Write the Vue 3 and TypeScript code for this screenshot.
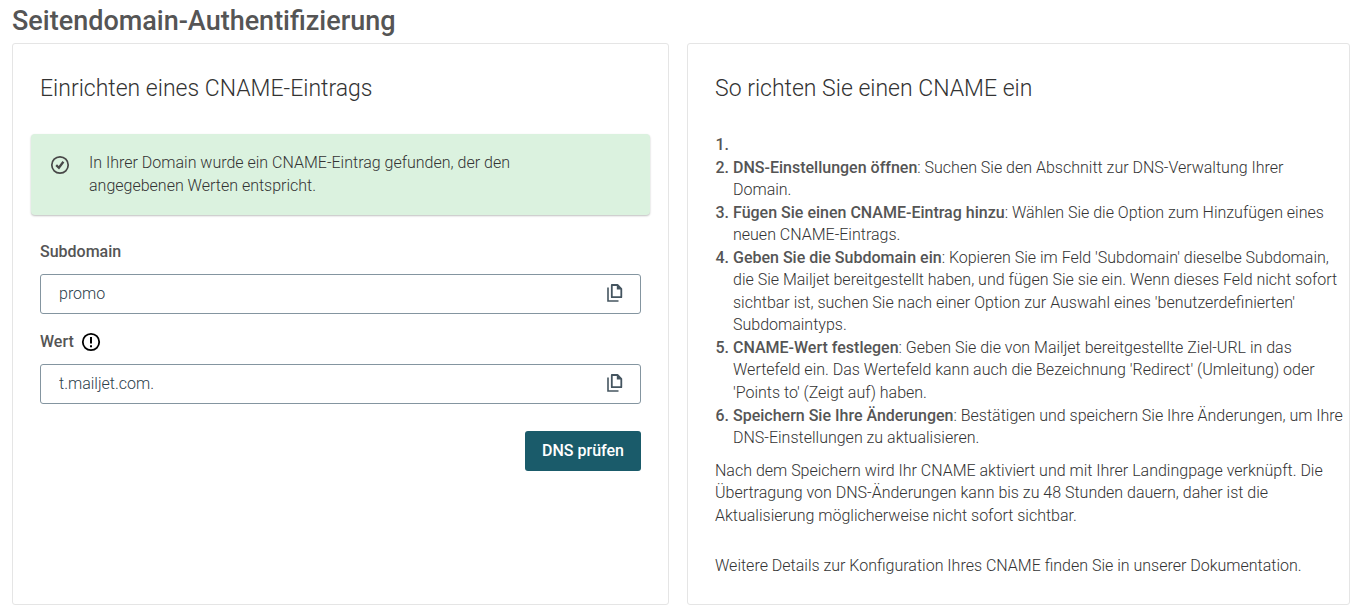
<script setup lang="ts">
import { ref } from 'vue'

interface Step {
  title: string
  text: string
}

const subdomain = ref('promo')
const target = ref('t.mailjet.com.')

const steps: Step[] = [
  { title: '', text: '' },
  {
    title: 'DNS-Einstellungen öffnen',
    text: ': Suchen Sie den Abschnitt zur DNS-Verwaltung Ihrer Domain.',
  },
  {
    title: 'Fügen Sie einen CNAME-Eintrag hinzu',
    text: ': Wählen Sie die Option zum Hinzufügen eines neuen CNAME-Eintrags.',
  },
  {
    title: 'Geben Sie die Subdomain ein',
    text: ": Kopieren Sie im Feld 'Subdomain' dieselbe Subdomain, die Sie Mailjet bereitgestellt haben, und fügen Sie sie ein. Wenn dieses Feld nicht sofort sichtbar ist, suchen Sie nach einer Option zur Auswahl eines 'benutzerdefinierten' Subdomaintyps.",
  },
  {
    title: 'CNAME-Wert festlegen',
    text: ": Geben Sie die von Mailjet bereitgestellte Ziel-URL in das Wertefeld ein. Das Wertefeld kann auch die Bezeichnung 'Redirect' (Umleitung) oder 'Points to' (Zeigt auf) haben.",
  },
  {
    title: 'Speichern Sie Ihre Änderungen',
    text: ': Bestätigen und speichern Sie Ihre Änderungen, um Ihre DNS-Einstellungen zu aktualisieren.',
  },
]

function copy(value: string) {
  navigator.clipboard?.writeText(value)
}
</script>

<template>
  <main class="page">
    <h1>Seitendomain-Authentifizierung</h1>
    <div class="columns">
      <section class="card setup">
        <h2>Einrichten eines CNAME-Eintrags</h2>
        <div class="notice" role="status">
          <svg class="notice-icon" viewBox="0 0 20 20" aria-hidden="true">
            <circle cx="10" cy="10" r="8.2" fill="none" stroke="currentColor" stroke-width="1.7" />
            <path d="M6.2 10.2 L8.9 12.8 L13.4 6.8" fill="none" stroke="currentColor" stroke-width="2.3" />
          </svg>
          <p>In Ihrer Domain wurde ein CNAME-Eintrag gefunden, der den angegebenen Werten entspricht.</p>
        </div>
        <form @submit.prevent>
          <label for="subdomain">Subdomain</label>
          <div class="field">
            <input id="subdomain" v-model="subdomain" type="text" readonly />
            <button class="copy" type="button" aria-label="Subdomain kopieren" @click="copy(subdomain)">
              <svg viewBox="0 0 16 18" aria-hidden="true">
                <path d="M1 3.5 V17 H11.5" fill="none" stroke="currentColor" stroke-width="1.6" />
                <path d="M4.8 1 H10.5 L14.3 4.8 V13.2 H4.8 Z" fill="none" stroke="currentColor" stroke-width="1.8" stroke-linejoin="round" />
                <path d="M9.8 1 L14.6 5.6 H9.8 Z" fill="currentColor" />
              </svg>
            </button>
          </div>
          <label for="target">
            Wert
            <svg class="info" viewBox="0 0 20 20" aria-hidden="true">
              <circle cx="10" cy="10" r="8.2" fill="none" stroke="currentColor" stroke-width="1.8" />
              <path d="M10 5 V11.6 M10 13.2 V15.2" fill="none" stroke="currentColor" stroke-width="2" />
            </svg>
          </label>
          <div class="field">
            <input id="target" v-model="target" type="text" readonly />
            <button class="copy" type="button" aria-label="Wert kopieren" @click="copy(target)">
              <svg viewBox="0 0 16 18" aria-hidden="true">
                <path d="M1 3.5 V17 H11.5" fill="none" stroke="currentColor" stroke-width="1.6" />
                <path d="M4.8 1 H10.5 L14.3 4.8 V13.2 H4.8 Z" fill="none" stroke="currentColor" stroke-width="1.8" stroke-linejoin="round" />
                <path d="M9.8 1 L14.6 5.6 H9.8 Z" fill="currentColor" />
              </svg>
            </button>
          </div>
          <button class="check" type="submit">DNS prüfen</button>
        </form>
      </section>
      <section class="card guide">
        <h2>So richten Sie einen CNAME ein</h2>
        <ol>
          <li v-for="(step, i) in steps" :key="i">
            <strong>{{ step.title }}</strong>{{ step.text }}
          </li>
        </ol>
        <p>Nach dem Speichern wird Ihr CNAME aktiviert und mit Ihrer Landingpage verknüpft. Die Übertragung von DNS-Änderungen kann bis zu 48 Stunden dauern, daher ist die Aktualisierung möglicherweise nicht sofort sichtbar.</p>
        <p class="more">Weitere Details zur Konfiguration Ihres CNAME finden Sie in unserer Dokumentation.</p>
      </section>
    </div>
  </main>
</template>

<style>
body {
  margin: 0;
  background: #fff;
}
</style>

<style scoped>
.page {
  padding: 4px 11px 7px 12px;
  color: #333;
  font-family: Roboto, sans-serif;
  font-size: 16px;
  font-weight: 300;
  line-height: 1.41;
}
* {
  box-sizing: border-box;
}
h1,
h2,
p {
  margin: 0;
}
h1 {
  color: #555;
  font-size: 27px;
  font-weight: 500;
  line-height: 34px;
  margin-bottom: 5px;
}
.columns {
  display: grid;
  grid-template-columns: 657fr 663fr;
  gap: 18px;
}
.card {
  border: 1px solid #e5e5e5;
  border-radius: 3px;
  background: #fff;
}
h2 {
  font-size: 23px;
  font-weight: 300;
  line-height: 30px;
}
.setup {
  padding: 30px 27px 27px;
}
.notice {
  display: flex;
  gap: 19px;
  margin: 30px -9px 26px;
  padding: 17px 19px 18px;
  border-radius: 4px;
  background: #dbf2df;
  box-shadow: 0 1px 2px rgba(0, 0, 0, 0.25);
}
.notice p {
  max-width: 460px;
  line-height: 23px;
}
.notice-icon {
  flex: none;
  width: 20px;
  height: 20px;
  margin-top: 4px;
  color: #484848;
}
form {
  display: flex;
  flex-direction: column;
}
label {
  display: flex;
  align-items: center;
  gap: 7px;
  margin-bottom: 11px;
  color: #555;
  font-weight: 500;
  line-height: 22px;
}
.info {
  width: 20px;
  height: 20px;
  color: #000;
}
.field {
  display: flex;
  align-items: center;
  height: 40px;
  margin-bottom: 17px;
  border: 1px solid #8495a0;
  border-radius: 3px;
}
input {
  flex: 1;
  min-width: 0;
  height: 100%;
  padding: 0 18px 2px;
  border: 0;
  outline: 0;
  background: transparent;
  color: #2c404b;
  font: inherit;
}
.copy {
  display: flex;
  padding: 0 0 2px;
  margin-right: 17px;
  border: 0;
  background: none;
  color: #455560;
}
.copy svg {
  width: 16px;
  height: 18px;
}
.check {
  align-self: flex-end;
  height: 40px;
  margin-top: 10px;
  padding: 0 17px 2px;
  border: 0;
  border-radius: 3px;
  background: #1a5b6a;
  color: #fff;
  font: 500 16px Roboto, sans-serif;
}
.guide {
  padding: 30px 5px 26px 27px;
}
ol {
  margin: 30px 0 10px;
  padding-left: 18px;
}
strong,
li::marker {
  color: #555;
  font-weight: 500;
}
.more {
  margin-top: 28px;
}
</style>
